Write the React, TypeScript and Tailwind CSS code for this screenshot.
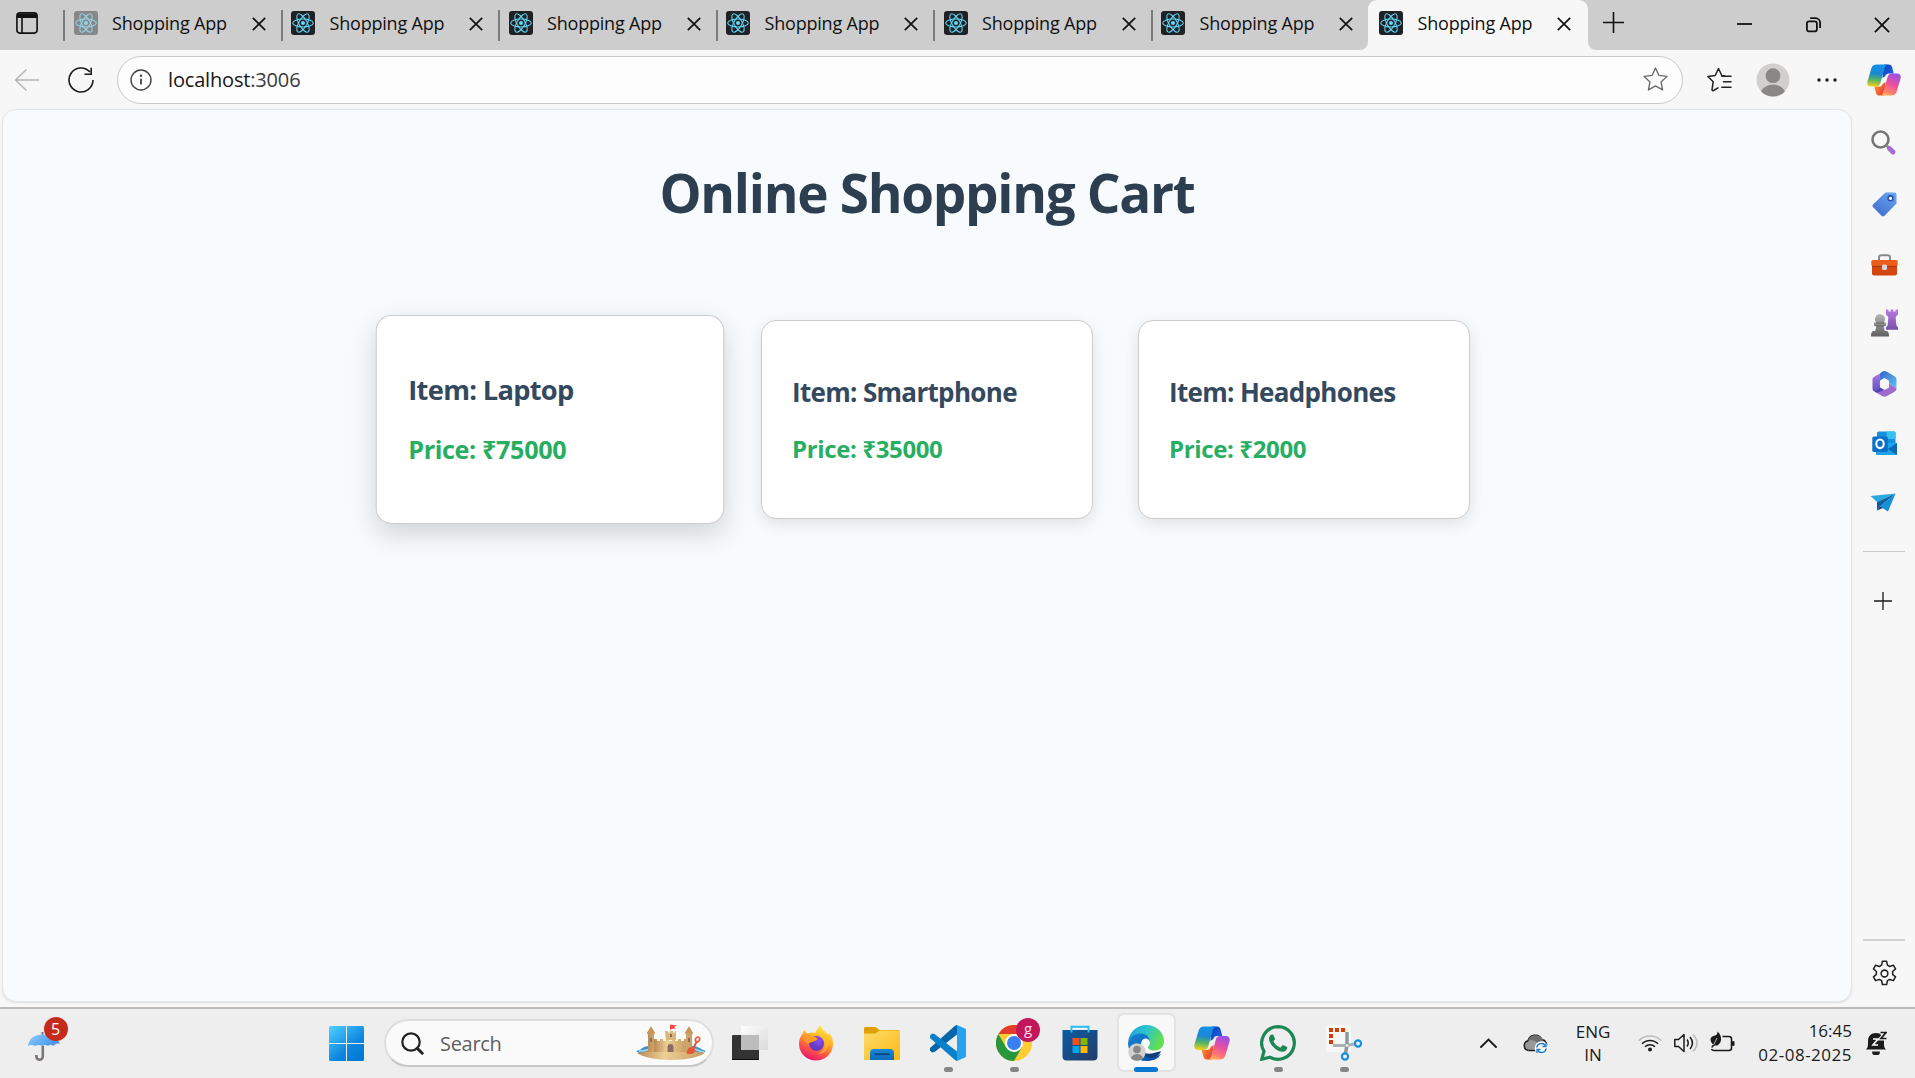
import React from "react";

const ui = "font-['Open_Sans','Noto_Sans',sans-serif]";

function ReactMark({ faded = false }: { faded?: boolean }) {
  return (
    <svg width="24" height="24" viewBox="0 0 24 24" className={faded ? "shrink-0 opacity-50" : "shrink-0"}>
      <rect width="24" height="24" rx="3" fill={faded ? "#404448" : "#202124"} />
      <g fill="none" stroke="#61dafb" strokeWidth="1.05">
        <ellipse cx="12" cy="12" rx="10.3" ry="4" />
        <ellipse cx="12" cy="12" rx="10.3" ry="4" transform="rotate(60 12 12)" />
        <ellipse cx="12" cy="12" rx="10.3" ry="4" transform="rotate(120 12 12)" />
      </g>
      <circle cx="12" cy="12" r="2" fill="#61dafb" />
    </svg>
  );
}

function Cross({ size = 14, w = 1.7 }: { size?: number; w?: number }) {
  return (
    <svg width={size} height={size} viewBox="0 0 14 14" className="shrink-0" stroke="#111" strokeWidth={w}>
      <path d="M0.8 0.8 13.2 13.2M13.2 0.8 0.8 13.2" />
    </svg>
  );
}

function Tab({ faded }: { faded?: boolean }) {
  return (
    <div className="flex h-[46px] w-[217.5px] shrink-0 items-center">
      <div className="mt-[5px] h-[31px] w-[2px] bg-[#7b7b7b]" />
      <div className="ml-[8.5px] flex"><ReactMark faded={faded} /></div>
      <span className="ml-[14.5px] w-[139.5px] whitespace-nowrap text-[18px] leading-6 tracking-[-0.2px] text-[#111]">Shopping App</span>
      <span className="mt-[2px]"><Cross /></span>
    </div>
  );
}

function TitleBar() {
  return (
    <div className="flex h-[50px] w-full bg-[#cdcdcd]">
      <div className="flex w-[63px] shrink-0 pl-[16px] pt-[12px]">
        <svg width="22" height="22" viewBox="0 0 22 22" fill="none" stroke="#111" strokeWidth="1.6">
          <rect x="0.9" y="0.9" width="20.2" height="20.2" rx="3" />
          <path d="M1 1.5h20v4.5H1z" fill="#111" stroke="none" />
          <path d="M6 6v15" />
        </svg>
      </div>
      <Tab faded />
      <Tab /><Tab /><Tab /><Tab /><Tab />
      <div className="relative flex h-[50px] w-[220px] shrink-0 items-center rounded-t-[9px] bg-[#f7f7f7] pb-1 pl-[11px]">
        <svg className="absolute -left-[8px] bottom-0" width="8" height="8" viewBox="0 0 8 8"><path d="M8 0v8H0a8 8 0 0 0 8-8" fill="#f7f7f7" /></svg>
        <svg className="absolute -right-[8px] bottom-0" width="8" height="8" viewBox="0 0 8 8"><path d="M0 0v8h8a8 8 0 0 1-8-8" fill="#f7f7f7" /></svg>
        <ReactMark />
        <span className="ml-[14.5px] w-[139px] whitespace-nowrap text-[18px] leading-6 tracking-[-0.2px] text-[#111]">Shopping App</span>
        <span className="mt-[2px]"><Cross /></span>
      </div>
      <div className="flex w-[50px] shrink-0 pl-[15px] pt-[12px]">
        <svg width="21" height="21" viewBox="0 0 21 21" stroke="#111" strokeWidth="1.6"><path d="M10.5 0v21M0 10.5h21" /></svg>
      </div>
      <div className="ml-auto mt-[16px] flex h-4 items-center">
        <svg width="15" height="16" viewBox="0 0 15 16" stroke="#111" strokeWidth="1.8"><path d="M0 8h15" /></svg>
        <svg className="ml-[54px] mt-[2px]" width="16" height="16" viewBox="0 0 16 16" fill="none" stroke="#111" strokeWidth="1.8">
          <rect x="0.9" y="4.4" width="10" height="10" rx="2.2" />
          <path d="M4.2 1.2h5.3a4.6 4.6 0 0 1 4.6 4.6v5.2" />
        </svg>
        <span className="ml-[52px] mr-[25px] mt-[1px]"><Cross size={16} w={1.6} /></span>
      </div>
    </div>
  );
}

function Copilot({ id, size = 36 }: { id: string; size?: number }) {
  return (
    <svg width={size} height={size} viewBox="0 0 36 36" className="shrink-0">
      <defs>
        <linearGradient id={id + "a"} x1="0.4" y1="0" x2="0.3" y2="1">
          <stop offset="0" stopColor="#1690e8" /><stop offset="0.4" stopColor="#1789d4" /><stop offset="0.7" stopColor="#59b560" /><stop offset="1" stopColor="#f5d020" />
        </linearGradient>
        <linearGradient id={id + "b"} x1="0.7" y1="0" x2="0.3" y2="1">
          <stop offset="0" stopColor="#9b4ee8" /><stop offset="0.45" stopColor="#e850a0" /><stop offset="0.8" stopColor="#ff7a70" /><stop offset="1" stopColor="#ffb25a" />
        </linearGradient>
        <linearGradient id={id + "c"} x1="0" y1="0" x2="1" y2="1">
          <stop offset="0" stopColor="#0c3fb8" /><stop offset="1" stopColor="#2468e8" />
        </linearGradient>
        <linearGradient id={id + "d"} x1="0" y1="0" x2="1" y2="0.6">
          <stop offset="0" stopColor="#ff9a35" /><stop offset="1" stopColor="#e8402a" />
        </linearGradient>
      </defs>
      <path d="M18 1.5h5c2 0 3 1 3.600 3l1.700 6.500h-5c-2.200 0-3.400 1-4 3l-3 2z" fill={`url(#${id}c)`} />
      <path d="M18 34.500h-5c-2 0-3-1-3.600-3l-1.700-6.500h5c2.200 0 3.400-1 4-3l3-2z" fill={`url(#${id}d)`} />
      <path d="M10 1.500h12.500c-2 0-3 1.200-3.700 3.500l-4.500 16c-.7 2.600-2 4-4.500 4H4.200C.8 25-.3 22.500.6 19L4.700 5.500C5.500 2.800 7.300 1.500 10 1.500" fill={`url(#${id}a)`} />
      <path d="M26 34.500H13.500c2 0 3-1.200 3.700-3.500l4.500-16c.7-2.600 2-4 4.500-4h5.600c3.400 0 4.500 2.500 3.600 6l-4.100 13.500c-.8 2.700-2.600 4-5.300 4" fill={`url(#${id}b)`} />
    </svg>
  );
}

function Toolbar() {
  return (
    <div className="flex h-[59px] w-full items-center bg-[#f7f7f7]">
      <svg className="ml-[14px] shrink-0" width="26" height="24" viewBox="0 0 26 24" fill="none" stroke="#b5b5b5" strokeWidth="1.4"><path d="M25 12H1.500M12.500 1.500 1.500 12l11 10.500" /></svg>
      <svg className="ml-[28px] shrink-0" width="26" height="26" viewBox="0 0 26 26" fill="none" stroke="#1b1b1b" strokeWidth="1.600">
        <path d="M25 13A12 12 0 1 1 22 5" /><path d="M23.200 0.800V7.200H16.500" />
      </svg>
      <div className="ml-[23px] flex h-[48px] w-[1566px] shrink-0 items-center rounded-full border border-[#c9c9c9] bg-[#fdfdfd] pl-[12px] pr-[14px]">
        <svg width="22" height="22" viewBox="0 0 22 22" fill="none" stroke="#444" strokeWidth="1.400">
          <circle cx="11" cy="11" r="10" /><path d="M11 9.800v5.700" strokeWidth="1.800" /><circle cx="11" cy="6.800" r="1.200" fill="#444" stroke="none" />
        </svg>
        <span className="ml-[16px] mt-px text-[20px] leading-[26px] tracking-[-0.170px] text-[#3a3a3a]"><span className="text-[#171717]">localhost</span>:3006</span>
        <svg className="ml-auto" width="25" height="25" viewBox="0 0 24 24" fill="none" stroke="#6a6a6a" strokeWidth="1.300" strokeLinejoin="round"><path d="m12 1 3.300 7.100 7.700.9-5.700 5.300 1.500 7.700L12 18.200 5.200 22l1.500-7.700L1 9l7.700-.9z" /></svg>
      </div>
      <svg className="ml-[24px] shrink-0" width="25" height="26" viewBox="0 0 25 26" fill="none" stroke="#222" strokeWidth="1.500" strokeLinejoin="round" strokeLinecap="round">
        <path d="M17.500 9 14.800 8.500 11.500 1.500 8.200 8.500 0.900 9.500l5.300 5.200L5 22.600c.1.900.8 1.300 1.600.9l4.400-2.600" />
        <path d="M14.800 9.200H24M16.500 14.700H24M14.800 20.200H24" />
      </svg>
      <svg className="ml-[24px] shrink-0" width="34" height="34" viewBox="0 0 34 34">
        <defs><clipPath id="avatar"><circle cx="17" cy="17" r="16.500" /></clipPath></defs>
        <circle cx="17" cy="17" r="16.500" fill="#d2d0ce" />
        <g clipPath="url(#avatar)" fill="#8a8886"><circle cx="17" cy="12.700" r="7.400" /><ellipse cx="17" cy="31.500" rx="12.500" ry="10" /></g>
      </svg>
      <svg className="ml-[27px] shrink-0" width="20" height="4" viewBox="0 0 20 4" fill="#222"><circle cx="2" cy="2" r="1.800" /><circle cx="10" cy="2" r="1.800" /><circle cx="18" cy="2" r="1.800" /></svg>
      <div className="ml-[30px]"><Copilot id="top" size={34} /></div>
    </div>
  );
}

function Card({ item, price, raised }: { item: string; price: string; raised?: boolean }) {
  return (
    <div
      className={
        raised
          ? "h-[199px] w-[332px] scale-105 rounded-[15px] border border-[#ccc] bg-white pl-[30px] pt-[53px] shadow-[0_10px_25px_rgba(0,0,0,0.15)]"
          : "h-[199px] w-[332px] rounded-[15px] border border-[#ccc] bg-white pl-[30px] pt-[54px] shadow-[0_5px_15px_rgba(0,0,0,0.1)]"
      }
    >
      <h2 className="whitespace-nowrap text-[26px] font-bold leading-[35px] tracking-[-0.680px] text-[#34495e]">Item: {item}</h2>
      <p className="mt-[23px] whitespace-nowrap text-[24px] font-bold leading-[32px] tracking-[-0.370px] text-[#27ae60]">Price: {price}</p>
    </div>
  );
}

function Sidebar() {
  return (
    <aside className="flex w-[63px] shrink-0 flex-col items-center pl-px pt-[21px]">
      <svg width="25" height="25" viewBox="0 0 25 25" className="mr-[2px]">
        <circle cx="9.500" cy="9.500" r="8" fill="none" stroke="#757575" strokeWidth="2.600" />
        <path d="m15 15 3 3" stroke="#858585" strokeWidth="2.600" />
        <path d="m18.500 18.500 3.500 3.500" stroke="#a56bd6" strokeWidth="4.800" strokeLinecap="round" />
      </svg>
      <svg width="25" height="25" viewBox="0 0 25 25" className="mt-[37px]">
        <defs><linearGradient id="tag" x1="1" y1="0" x2="0.300" y2="1"><stop stopColor="#6ba8f2" /><stop offset="1" stopColor="#436fd0" /></linearGradient></defs>
        <path d="M13.500 0.500h8.700c1.400 0 2.300.9 2.300 2.300v8.700L12.500 23.700c-1 1-2 1-3 0L1.200 15.200c-1-1-1-2 0-3z" fill="url(#tag)" />
        <circle cx="18.500" cy="6.300" r="2.400" fill="#fff" stroke="#2b4fae" strokeWidth="1.600" />
      </svg>
      <svg width="27" height="22" viewBox="0 0 27 22" className="mt-[37px]">
        <path d="M8 7V3.500C8 2 9 1.200 10.200 1.200h6.600C18 1.200 19 2 19 3.500V7" fill="none" stroke="#858c8c" strokeWidth="2" />
        <rect x="1" y="7" width="25" height="14.500" rx="2" fill="#d4460f" /><rect x="0.300" y="6" width="26.400" height="6" rx="1.500" fill="#eb5d1a" />
        <path d="M1 12.500h25" stroke="#a8350b" /><rect x="11" y="10.500" width="5" height="5.500" rx="1.500" fill="#d5d5d5" />
      </svg>
      <svg width="27" height="28" viewBox="0 0 27 28" className="mt-[33px]">
        <defs><linearGradient id="rook" x2="0" y2="1"><stop stopColor="#b87ae4" /><stop offset="1" stopColor="#7751a8" /></linearGradient><linearGradient id="pawn" x2="0" y2="1"><stop stopColor="#b5b5b5" /><stop offset="1" stopColor="#606060" /></linearGradient></defs>
        <path d="M15 0.500h2.500v2h2.200v-2h2.600v2h2.200v-2H27v5l-2.400 2.500.8 8.500 1.600 1.700v2.500H15v-2.500l1.600-1.700.8-8.500L15 5.500z" fill="url(#rook)" />
        <path d="M3 17v-3.500h2.300a5 5 0 1 1 7.400 0H15V17h-2.500l1.300 5h1.200c2 0 3 1.500 3 5.500H0C0 23.500 1 22 3 22h1.200l1.300-5z" fill="url(#pawn)" />
        <path d="M5 14h8M4.500 17h9" stroke="#555" strokeWidth=".8" />
      </svg>
      <svg width="25" height="26" viewBox="0 0 25 26" className="mt-[34px]">
        <defs><linearGradient id="m1" x2="0" y2="1"><stop stopColor="#b878e6" /><stop offset="1" stopColor="#6051bd" /></linearGradient><linearGradient id="m2" x2="1" y2="1"><stop stopColor="#3365ce" /><stop offset="1" stopColor="#61c3ef" /></linearGradient></defs>
        <path d="M12.500 0 8 2.400 2.200 5.800C.8 6.600.5 7.500.5 9v8.500c0 1.500.6 2.300 1.800 3L8 17.500V9.500z" fill="url(#m1)" />
        <path d="M10 .8c1.700-1 3.300-1 5 0l7.500 4.400c1.400.8 2 1.800 2 3.500V17l-7.500-4.500V9.700L12.500 7 8 9.600V4.400C8 2.500 8.600 1.600 10 .8" fill="url(#m2)" />
        <path d="m2.300 20.500 7.700 4.600c1.700 1 3.300 1 5 0l7.500-4.400c1.400-.8 2-2 2-3.700L17 12.500v4L12.500 19 8 16.500z" fill="#a26bd0" />
        <path d="M8 16.500 12 19 5 21.800l-2.700-1.300z" fill="#4b46b2" />
        <circle cx="12.500" cy="13" r="4.700" fill="#f7f7f7" />
      </svg>
      <svg width="25" height="25" viewBox="0 0 25 25" className="mt-[34px]">
        <rect x="5" y="0.500" width="18.500" height="20" rx="1.500" fill="#1490df" /><path d="M14.500.5H22c1 0 1.500.5 1.500 1.500v6h-9z" fill="#35c1f1" />
        <path d="M4 12h21v10.500c0 1-.5 1.500-1.500 1.500H5.500C4.500 24 4 23.500 4 22.500z" fill="#1aa5e8" /><path d="m25 12-9 6 9 6z" fill="#1066b5" />
        <rect x="0.300" y="5.500" width="15.500" height="15.500" rx="1.500" fill="#0a6fc7" /><ellipse cx="8" cy="12.800" rx="3.700" ry="4.300" fill="none" stroke="#fff" strokeWidth="2.100" />
      </svg>
      <svg width="26" height="19" viewBox="0 0 26 19" className="mr-[2px] mt-[37px]">
        <path d="M0.500 3 25.500 0.500 7 9z" fill="#28a9df" /><path d="M25.500.5 18 18.500 10 13.500z" fill="#1790dc" /><path d="M25.500.5 7 9v8.500l3-4z" fill="#0b5fa5" /><path d="m7 17.500 3.500-1.500L13 15l-3-1.500z" fill="#123a63" />
      </svg>
      <div className="mt-[39px] h-px w-[42px] shrink-0 bg-[#cbcbcb]" />
      <svg width="18" height="18" viewBox="0 0 18 18" stroke="#1b1b1b" strokeWidth="1.300" className="mr-[2px] mt-[40px]"><path d="M9 0v18M0 9h18" /></svg>
      <div className="mt-auto h-[2px] w-[42px] bg-[#d0d0d0]" />
      <svg width="27" height="27" viewBox="0 0 24 24" className="mb-[20px] mt-[19px]" fill="none" stroke="#222" strokeWidth="1.350" strokeLinejoin="round">
        <circle cx="12" cy="12" r="3" />
        <path d="M10.100 1.200h3.800l.7 3.400 2 1.150 3.300-1.100 1.900 3.300-2.600 2.300v2.500l2.600 2.300-1.900 3.300-3.300-1.100-2 1.150-.7 3.400h-3.800l-.7-3.400-2-1.150-3.300 1.100-1.900-3.300 2.600-2.300v-2.500l-2.600-2.300 1.900-3.300 3.300 1.100 2-1.150z" />
      </svg>
    </aside>
  );
}

function Cell({ children, mark }: { children: React.ReactNode; mark?: boolean }) {
  return (
    <div className="relative flex h-[60px] w-[66px] shrink-0 items-center justify-center">
      {children}
      {mark && <div className="absolute bottom-[1px] left-[29px] h-[5px] w-[9px] rounded-full bg-[#868686]" />}
    </div>
  );
}

function SandCastle() {
  return (
    <svg width="70" height="37" viewBox="0 0 70 37">
      <defs><linearGradient id="sand" x2="1" y2="0"><stop stopColor="#b98a52" /><stop offset="0.400" stopColor="#edcf95" /><stop offset="1" stopColor="#c79a60" /></linearGradient></defs>
      <path d="M0 27c8-2 6-5 14-5h42c6 0 8 3 14 5l-8 5H8z" fill="#3c8fd0" />
      <path d="M3 27c10 0 10-3 16-3h34c6 0 8 3 15 4" fill="none" stroke="#a5dcef" strokeWidth="1.500" />
      <path d="M1 29c10-1 14-3 34-3s26 2 34 3c-6 4-18 7-34 7S7 33 1 29" fill="url(#sand)" />
      <path d="M18 15h3v2h3v-2h3v2h3v-2h3v2h3v-2h3v2h3v-2h3v2h3v-2h3v13H18z" fill="url(#sand)" />
      <path d="M29 7h3v1.500h2V7h3v1.500h2V7h1v9H30z" fill="#dcb77c" />
      <path d="M12 28V11l-1-2 4-6.500L19 9l-1 2v17zM50 28V11l-1-2 4-6.500L57 9l-1 2v17z" fill="url(#sand)" />
      <path d="m11 9 4-6.500L19 9zM49 9l4-6.500L57 9z" fill="#c89555" />
      <path d="M34 6.500V.5l7 1-3 1.500 2 1.500-5 .5" fill="#f0483d" />
      <path d="M31.500 28v-5a3 3 0 0 1 6 0v5z" fill="#8d6a63" /><path d="M14 14h2v4h-2zM52 14h2v4h-2zM34 10h2v3h-2z" fill="#8d6a63" />
      <path d="m57 25 4-8" stroke="#e2502d" strokeWidth="1.800" /><ellipse cx="61.500" cy="15.500" rx="2" ry="2.500" fill="none" stroke="#f15a38" strokeWidth="1.600" transform="rotate(25 61.500 15.500)" />
      <path d="M52 25c3-3 6-2 7 0 0 3-1 5-6 5-3 0-3-2-1-5" fill="#e8552e" />
    </svg>
  );
}

function Taskbar() {
  return (
    <footer className="flex h-[71px] w-full shrink-0 border-t-2 border-[#bcbcbc] bg-[#eeeeee]">
      <div className="relative w-[329px] shrink-0 pl-[28px] pt-[23px]">
        <svg width="33" height="30" viewBox="0 0 33 30">
          <defs><linearGradient id="umb" x2="1" y2="0.500"><stop stopColor="#8fd0fc" /><stop offset="1" stopColor="#4793ee" /></linearGradient></defs>
          <path d="M14.500 0v3" stroke="#777" strokeWidth="2" />
          <path d="M0 14C1 6 7 2.500 14.500 2.500S30 6 32 12c-3-1-5 0-7 2-2-2-3-1.500-5 0-1.500-1.500-4-1.500-5.500 0C12 12.500 9 12.500 7 14c-2-1.500-5-1.500-7 0" fill="url(#umb)" />
          <path d="M14.800 14v10.500a3.200 3.200 0 0 1-6.400 0V23" fill="none" stroke="#7b7573" strokeWidth="2.600" />
        </svg>
        <div className="absolute left-[43.5px] top-[8px] flex size-[24px] items-center justify-center rounded-full bg-[#c42b1c] text-[16px] leading-none text-white">5</div>
      </div>
      <svg className="mt-[17px] shrink-0" width="35" height="35" viewBox="0 0 35 35">
        <defs><linearGradient id="win" gradientUnits="userSpaceOnUse" x1="0" y1="0" x2="30" y2="35"><stop stopColor="#4fd2ff" /><stop offset="0.650" stopColor="#0d86e0" /><stop offset="1" stopColor="#0078d4" /></linearGradient></defs>
        <path d="M1.500 0H17v17H0V1.500A1.500 1.500 0 0 1 1.500 0M18 0h15.500A1.500 1.500 0 0 1 35 1.500V17H18zM0 18h17v17H1.500A1.500 1.500 0 0 1 0 33.500zM18 18h17v15.500a1.500 1.500 0 0 1-1.500 1.500H18z" fill="url(#win)" />
      </svg>
      <div className="ml-[20px] mt-[10px] flex h-[48px] w-[330px] shrink-0 items-center rounded-full border-2 border-[#dedede] border-b-[#c6c6c6] bg-[#fafafa] pl-[15px] pr-[6px]">
        <svg width="23" height="23" viewBox="0 0 23 23" fill="none" stroke="#222" strokeLinecap="round"><circle cx="10" cy="10" r="8.700" strokeWidth="2.200" /><path d="m16.500 16.500 4.700 4.700" strokeWidth="3" /></svg>
        <span className="ml-[16px] mt-px text-[20px] leading-[26px] tracking-[-0.300px] text-[#5f5f5f]">Search</span>
        <span className="ml-auto pb-[2px]"><SandCastle /></span>
      </div>
      <div className="ml-[3px] mt-[4px] flex">
        <Cell>
          <svg width="36" height="36" viewBox="0 0 36 36"><defs><linearGradient id="tv" x2="1" y2="1"><stop stopColor="#fff" /><stop offset="1" stopColor="#d9d9d9" /></linearGradient></defs>
            <rect x="9" y="1" width="27" height="24" rx="1" fill="url(#tv)" /><rect x="0" y="10" width="27" height="25" rx="1" fill="#333" /><path d="M9 10h18v15H9z" fill="#bcbcbc" /><path d="M0 34.500h27" stroke="#0a0a0a" /></svg>
        </Cell>
        <Cell>
          <svg width="36" height="36" viewBox="0 0 36 36"><defs><linearGradient id="ff" x1="0.800" y1="0" x2="0.350" y2="1"><stop stopColor="#fff14c" /><stop offset="0.400" stopColor="#ffb224" /><stop offset="0.700" stopColor="#ff5840" /><stop offset="1" stopColor="#ea1572" /></linearGradient><radialGradient id="ffp" cx="0.650" cy="0.300"><stop stopColor="#8d50f5" /><stop offset="1" stopColor="#623cc2" /></radialGradient></defs>
            <path d="M18 35.500C8.500 35.500 1 28 1 19c0-4 1-7.500 4-10.500 0-1.500.5-2.500 1.500-3.500.5 2 1.500 3 3 3.500C12 7.500 15 7 17.500 8c1-3.500 3-6.500 5.500-7.500 0 4 5 6 7 9 1-.5 1-1 1-2 3 3.500 4 7.500 4 11.500 0 9-7.500 16.500-17 16.500" fill="url(#ff)" />
            <circle cx="18.500" cy="18.500" r="7.500" fill="url(#ffp)" />
            <path d="M5 9.500c4-1 7 0 9 2.500 3-.5 5 .5 5.500 2-1 2-3 1.500-5 3-1.500.5-2.500.5-3.500 1.500C7 18 4.500 14 5 9.500" fill="#ff9a28" />
            <path d="M22 9c6 2 9 7 7.500 13-1.500 5-6 7.500-11 7 5-1 8.500-4.500 8.500-10 0-4-2-7.500-5-10" fill="#ffbd33" opacity=".7" /></svg>
        </Cell>
        <Cell>
          <svg width="36" height="36" viewBox="0 0 36 36"><defs><linearGradient id="fd" x2="1" y2="1"><stop stopColor="#ffdc6b" /><stop offset="1" stopColor="#fbb816" /></linearGradient><linearGradient id="fb" x2="0" y2="1"><stop stopColor="#1589d9" /><stop offset="1" stopColor="#0f6cbb" /></linearGradient></defs>
            <path d="M0 3.500c0-1 .5-1.500 1.500-1.500H11c2 0 3 3 5 3H34c1.500 0 2 1 2 2V10H0z" fill="#dfa000" /><path d="M0 8.500h11.500l4-3h19c1 0 1.500.5 1.500 1.500v26.500c0 1-.5 1.500-1.500 1.500h-33C.5 35 0 34.500 0 33.500z" fill="url(#fd)" /><path d="M6 35v-7a4 4 0 0 1 4-4h16a4 4 0 0 1 4 4v7z" fill="url(#fb)" /><path d="M10.500 29.200h15" stroke="#0a4479" strokeWidth="1.800" /></svg>
        </Cell>
        <Cell mark>
          <svg width="36" height="36" viewBox="0 0 36 36"><path d="M27 9.500 4.500 27 2 27.500 0 25.500V23L25 .800 27 0z" fill="#0065a9" /><path d="M27 26.500 4.500 9 2 8.500 0 10.500V13l25 22 2 1z" fill="#0880cc" /><path d="M27 0l8 3.500c.7.300 1 .8 1 1.500v26c0 .7-.3 1.200-1 1.500L27 36z" fill="#25a3f0" /></svg>
        </Cell>
        <Cell mark>
          <svg width="36" height="36" viewBox="0 0 36 36"><circle cx="18" cy="18" r="18" fill="#ffcd32" /><path d="M2.400 9A18 18 0 0 1 33.600 9H18z" fill="#e33b2e" /><path d="M2.400 9A18 18 0 0 0 18 36l7.800-13.500H10.200z" fill="#27963e" /><circle cx="18" cy="18" r="9" fill="#fff" /><circle cx="18" cy="18" r="7" fill="#397fef" /></svg>
          <div className="absolute left-[35px] top-[5px] flex size-[24px] items-center justify-center rounded-full bg-[#c2185b] pb-[3px] text-[15px] leading-none text-[#ffdce9]">g</div>
        </Cell>
        <Cell>
          <svg width="36" height="36" viewBox="0 0 36 36"><defs><linearGradient id="st" x2="1" y2="1"><stop stopColor="#0b5ba5" /><stop offset="1" stopColor="#243c66" /></linearGradient></defs>
            <path d="M.500 5h35v26.500c0 2.500-1.500 4-4 4H4.500c-2.500 0-4-1.500-4-4z" fill="url(#st)" /><path d="M9.500 7.500V1.800h17v5.700" fill="none" stroke="#29bdf2" strokeWidth="1.900" /><path d="M10.500 13h7v7h-7z" fill="#f25022" /><path d="M18.500 13h7v7h-7z" fill="#7fba00" /><path d="M10.500 21h7v7h-7z" fill="#00a4ef" /><path d="M18.500 21h7v7h-7z" fill="#ffb900" /></svg>
        </Cell>
        <div className="relative mx-[3.500px] flex h-[59px] w-[59px] items-center justify-center rounded-[7px] border-2 border-[#e3e3e3] bg-[#f8f8f8]">
          <svg width="36" height="36" viewBox="0 0 36 36"><defs><linearGradient id="e1" x2="1" y2="0.400"><stop stopColor="#1b9de0" /><stop offset="0.500" stopColor="#2cc3cd" /><stop offset="1" stopColor="#62df50" /></linearGradient><linearGradient id="e2" x2="0.800" y2="1"><stop stopColor="#1688d8" /><stop offset="1" stopColor="#0b4ea5" /></linearGradient></defs>
            <path d="M0 17C1 7 9 0 18.500 0 29 0 36 8 36 16c0 6-4 9.500-9.500 9.500-4 0-6.500-1.500-6.500-3 0-1 2-2 2-5 0-4-4-7.500-9-7.500C6 10 1 13 0 17" fill="url(#e1)" />
            <path d="M0 18C1 11 7 8.500 13 8.500c5 0 9 3.500 9 9 0-2-2-4-4.500-4-3 0-4.500 3-4.500 7C13 27 18 32 25 32c3 0 6-1.500 8-3-3 5-8 7-14.500 7C8 36 0 28 0 18" fill="url(#e2)" />
            <path d="M13 21c0 7 6 9 13 7 3-.700 5-2 7-1.500C31 31 27 33 23 33c-6 0-10-6-10-12" fill="#103f7d" />
            <circle cx="9" cy="27" r="8.700" fill="#d2d0ce" /><circle cx="9" cy="24.500" r="3.800" fill="#8a8886" /><path d="M3 33.500c1-6 11-6 12 0a9 9 0 0 1-12 0" fill="#8a8886" /></svg>
          <div className="absolute -bottom-[2px] left-[15px] h-[5px] w-[24px] rounded-full bg-[#0a78d0]" />
        </div>
        <Cell><Copilot id="task" /></Cell>
        <Cell mark>
          <svg width="36" height="36" viewBox="0 0 36 36"><path d="M18 1.700a16.300 16.300 0 0 0-14 24.600L1.800 34.200l8-2.100A16.300 16.300 0 1 0 18 1.700z" fill="none" stroke="#1b8755" strokeWidth="3.200" /><path d="M12.300 9.500c.7 0 1 .1 1.300.9l1.300 3c.2.500.1.900-.2 1.300l-1.300 1.600c1.500 3.200 4 5.200 7 6.400l1.800-2.100c.4-.5.800-.6 1.400-.3l3 1.400c.7.400.8.700.7 1.400-.4 2.400-2.500 3.700-4.600 3.700C16 26.500 9 19 9 13.600c0-2 1.200-4.100 3.300-4.100" fill="#1b8755" /></svg>
        </Cell>
        <Cell mark>
          <svg width="36" height="36" viewBox="0 0 36 36"><rect width="25" height="27" rx="3" fill="#f7f7f7" /><path d="M3 3h4v4H3zM9 3h4v4H9zM15 3h4v4h-4zM3 9h4v4H3zM3 15h4v4H3z" fill="#d83b01" /><path d="M21 7v13l-1.500 8" fill="none" stroke="#8d979f" strokeWidth="3.500" /><path d="M7 20.500h14l7-1.500" fill="none" stroke="#a9b1b7" strokeWidth="3" /><circle cx="32" cy="18.500" r="3.100" fill="none" stroke="#1490df" strokeWidth="2.200" /><circle cx="19" cy="31.500" r="3.100" fill="none" stroke="#1490df" strokeWidth="2.200" /><circle cx="21" cy="20.500" r="1.300" fill="#eee" /></svg>
        </Cell>
      </div>
      <Tray />
    </footer>
  );
}

function Tray() {
  return (
    <div className="ml-auto flex h-[68px] items-center">
      <svg width="17" height="10" viewBox="0 0 17 10" fill="none" stroke="#1b1b1b" strokeWidth="1.900" strokeLinecap="round"><path d="m1 9 7.500-7.500L16 9" /></svg>
      <svg className="ml-[26px] mt-[3px]" width="26" height="21" viewBox="0 0 26 21"><path d="M5.500 16.500a5 5 0 0 1-.5-9.800 7.500 7.500 0 0 1 14-1.200 5.500 5.500 0 0 1 4 8" fill="#999" stroke="#1b1b1b" strokeWidth="1.500" /><path d="M5 6.700c4-1 8 0 10 3l5-4c-3-6-13-6-15 1" fill="#707070" /><path d="M5.500 16.500H15" stroke="#1b1b1b" strokeWidth="1.500" /><circle cx="18.500" cy="14" r="6.800" fill="#fff" /><path d="M13.800 13.500a4.700 4.700 0 0 1 8.500-2M23.200 14.500a4.700 4.700 0 0 1-8.500 2" fill="none" stroke="#1c77c9" strokeWidth="1.500" /><path d="M23 9v3.500h-3.500M14 19v-3.500h3.500" fill="none" stroke="#1c77c9" strokeWidth="1.300" /></svg>
      <div className="ml-[26px] w-[36px] text-center text-[17px] leading-[23px] text-[#1b1b1b]">ENG<br />IN</div>
      <svg className="ml-[27px]" width="24" height="18" viewBox="0 0 24 18" fill="none" strokeWidth="1.500"><path d="M.700 6.700a16 16 0 0 1 22.600 0" stroke="#bcbcbc" /><path d="M4 9.800a11.300 11.300 0 0 1 16 0M7 12.700a7.200 7.200 0 0 1 10 0" stroke="#1b1b1b" /><circle cx="12" cy="15.500" r="2" fill="#1b1b1b" /></svg>
      <svg className="ml-[12px]" width="24" height="22" viewBox="0 0 24 22" fill="none" stroke="#1b1b1b" strokeWidth="1.500" strokeLinejoin="round"><path d="M.8 7.500H4.500L10 2.500v17L4.500 14.500H.8z" /><path d="M13 7.500q2.500 3.500 0 7M16 5q5 6 0 12" /><path d="M19 2.500q8 8.500 0 17" stroke="#bcbcbc" /></svg>
      <svg className="mb-[3px] ml-[12px]" width="25" height="22" viewBox="0 0 25 22"><path d="M12.500 5.500H19q2.500 0 2.500 2.500v9q0 2.500-2.500 2.500H4q-2 0-2.500-1.500" fill="none" stroke="#1b1b1b" strokeWidth="1.600" /><rect x="22" y="10" width="2.500" height="5" rx="1" fill="#1b1b1b" /><path d="M7.500.5c4 3.500 5.500 10 0 14H4.500L2 17l-.8-1L3 13.500C-2 8 1.500 5 5 4.500 7 4 7.500 2.500 7.500.5" fill="#1b1b1b" /><path d="M7 7 3.500 14" stroke="#ddd" strokeWidth=".8" /></svg>
      <div className="ml-[13px] w-[104px] whitespace-nowrap text-right text-[17px] leading-[24px] text-[#1b1b1b]">16:45<br /><span className="tracking-[0.500px]">02-08-2025</span></div>
      <svg className="ml-[14px] mr-[28px]" width="21" height="24" viewBox="0 0 21 24"><path d="M0 18.500c2-2.500 2-3 2-8C2 5 5 2 10 2s8 3 8 8.500c0 5 0 5.500 2 8zM6 20.500h8a4 4 0 0 1-8 0" fill="#1b1b1b" /><path d="M7 8h5l-5 6h5" fill="none" stroke="#fff" strokeWidth="1.600" /><path d="M14.500 1.500H20l-5 6h5.500" fill="none" stroke="#eee" strokeWidth="4" /><path d="M14.500 1.500H20l-5 6h5.500" fill="none" stroke="#1b1b1b" strokeWidth="1.700" /></svg>
    </div>
  );
}

export default function App() {
  return (
    <div className={`flex h-[1078px] w-[1915px] flex-col overflow-hidden bg-[#f7f7f7] ${ui}`}>
      <TitleBar />
      <Toolbar />
      <div className="flex h-[898px] shrink-0">
        <main className="ml-[2px] h-[893px] w-[1850px] shrink-0 rounded-[14px] border border-[#e4e6e8] bg-[#f7fbfe] shadow-[0_1px_2px_rgba(0,0,0,0.1)]">
          <h1 className="mt-[46px] text-center text-[53px] font-bold leading-[74px] tracking-[-1.280px] text-[#2c3e50]">Online Shopping Cart</h1>
          <div className="mt-[90px] flex justify-center gap-[45px]">
            <Card item="Laptop" price="₹75000" raised />
            <Card item="Smartphone" price="₹35000" />
            <Card item="Headphones" price="₹2000" />
          </div>
        </main>
        <Sidebar />
      </div>
      <Taskbar />
    </div>
  );
}
